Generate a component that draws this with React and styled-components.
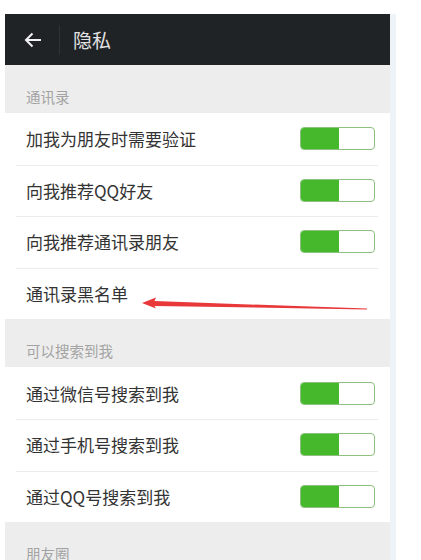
import React from 'react';
import styled, { createGlobalStyle } from 'styled-components';

const GlobalStyle = createGlobalStyle`
  body {
    margin: 0;
    background: #ffffff;
    font-family: "Noto Sans CJK SC", "Noto Sans", sans-serif;
  }
`;

const Page = styled.div`
  display: flex;
  align-items: flex-start;
  padding: 14px 0 0 5px;
  height: 546px;
  overflow: hidden;
`;

const Phone = styled.div`
  width: 385px;
  flex-shrink: 0;
  background: #ededed;
`;

const Strip = styled.div`
  width: 6px;
  align-self: stretch;
  background: #eef3f8;
`;

const TopBar = styled.div`
  height: 51px;
  background: #1f2326;
  display: flex;
  align-items: center;
`;

const Back = styled.div`
  width: 52px;
  display: flex;
  justify-content: center;
  padding-left: 2px;
  border-right: 1px solid #2d3235;
  height: 30px;
  align-items: center;
`;

const Title = styled.div`
  color: #e2e2e2;
  font-size: 19px;
  margin-left: 13px;
`;

const SectionTitle = styled.div`
  height: 48px;
  box-sizing: border-box;
  padding: 22px 0 0 21px;
  font-size: 14.5px;
  line-height: 20px;
  color: #a3a3a3;
`;

const Group = styled.div`
  background: #ffffff;
`;

const Row = styled.div`
  position: relative;
  height: 51.6px;
  display: flex;
  align-items: center;
  justify-content: space-between;
  padding: 0 15px 0 21px;
  & + & {
    &::before {
      content: '';
      position: absolute;
      top: 0;
      left: 11px;
      right: 12px;
      height: 1px;
      background: #ececec;
    }
  }
`;

const Label = styled.div`
  font-size: 17px;
  color: #333333;
`;

const Toggle = styled.div`
  width: 75px;
  height: 23px;
  box-sizing: border-box;
  border: 1px solid #8dbf7e;
  border-radius: 4px;
  background: #ffffff;
  overflow: hidden;
  display: flex;
`;

const ToggleOn = styled.div`
  width: 38px;
  background: #46b82b;
`;

const Pointer = styled.svg`
  position: absolute;
  left: 130px;
  top: 28px;
`;

const Switch = () => (
  <Toggle>
    <ToggleOn />
  </Toggle>
);

const contacts = ['加我为朋友时需要验证', '向我推荐QQ好友', '向我推荐通讯录朋友'];
const search = ['通过微信号搜索到我', '通过手机号搜索到我', '通过QQ号搜索到我'];

export default function App() {
  return (
    <>
      <GlobalStyle />
      <Page>
        <Phone>
          <TopBar>
            <Back>
              <svg width="18" height="16" viewBox="0 0 18 16">
                <path d="M17 8H2M8.5 1.5L2 8l6.5 6.5" fill="none" stroke="#f2f2f2" strokeWidth="2" />
              </svg>
            </Back>
            <Title>隐私</Title>
          </TopBar>
          <SectionTitle>通讯录</SectionTitle>
          <Group>
            {contacts.map(t => (
              <Row key={t}>
                <Label>{t}</Label>
                <Switch />
              </Row>
            ))}
            <Row>
              <Label>通讯录黑名单</Label>
              <Pointer width="240" height="18" viewBox="0 0 240 18">
                <polygon
                  points="7,7 21,1.5 19.5,5 232,12.6 232,13.4 19.5,10 21,12.5"
                  fill="#e8383a"
                />
              </Pointer>
            </Row>
          </Group>
          <SectionTitle>可以搜索到我</SectionTitle>
          <Group>
            {search.map(t => (
              <Row key={t}>
                <Label>{t}</Label>
                <Switch />
              </Row>
            ))}
          </Group>
          <SectionTitle>朋友圈</SectionTitle>
        </Phone>
        <Strip />
      </Page>
    </>
  );
}
